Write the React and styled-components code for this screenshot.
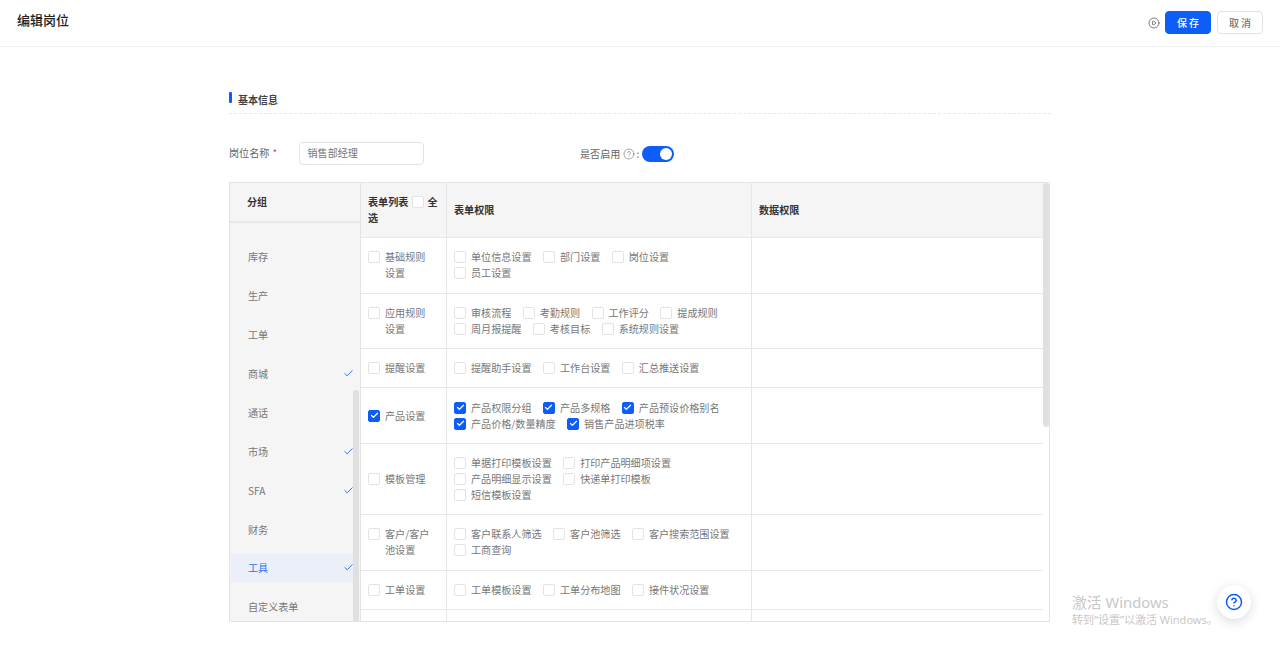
import React from "react";
import styled, { createGlobalStyle } from "styled-components";
import { CirclePlay, CircleHelp, Check } from "lucide-react";

const Global = createGlobalStyle`
  html, body { margin: 0; padding: 0; background: #fff; }
  body { font-family: "Noto Sans CJK SC", "Noto Sans", sans-serif; color: #666; font-size: 10.1px; }
  * { box-sizing: border-box; }
`;

const Page = styled.div`
  position: relative;
  width: 1280px;
  height: 663px;
  overflow: hidden;
`;
const Header = styled.header`
  height: 47px;
  border-bottom: 1px solid #f2f2f2;
  display: flex;
  align-items: flex-start;
  justify-content: space-between;
  padding: 11px 17px 0;
`;
const Title = styled.h1`
  margin: 0;
  font-size: 13px;
  line-height: 18px;
  font-weight: 500;
  color: #222;
`;
const Actions = styled.div`
  display: flex;
  align-items: center;
  color: #555;
  svg { margin-right: 5px; margin-top: 1px; }
`;
const Button = styled.button`
  width: 46px;
  height: 23px;
  margin-left: ${(p) => (p.$primary ? "0" : "6px")};
  border-radius: 4px;
  border: 1px solid ${(p) => (p.$primary ? "#0d5ef8" : "#e3e3e3")};
  background: ${(p) => (p.$primary ? "#0d5ef8" : "#fff")};
  color: ${(p) => (p.$primary ? "#fff" : "#777")};
  font: 500 10px/1 "Noto Sans CJK SC", sans-serif;
  letter-spacing: 2px;
  padding: 0 0 0 2px;
`;
const Main = styled.main`
  width: 822px;
  margin: 0 auto;
  padding-top: 45px;
`;
const SectionHead = styled.div`
  height: 22px;
  border-bottom: 1px dashed #e8e8e8;
  display: flex;
  align-items: flex-start;
`;
const SectionBar = styled.i`
  width: 3px;
  height: 11px;
  border-radius: 1px;
  background: #0d5ef8;
`;
const SectionTitle = styled.h2`
  margin: 0 0 0 6px;
  font-size: 10px;
  line-height: 16px;
  font-weight: 700;
  color: #444;
`;
const FormRow = styled.div`
  display: flex;
  align-items: center;
  height: 23px;
  margin-top: 28px;
`;
const NameLabel = styled.label`
  width: 69.5px;
  color: #666;
  line-height: 16px;
  margin-top: -2px;
`;
const Star = styled.span`
  color: #f5455c;
  margin-left: 3px;
`;
const NameInput = styled.div`
  width: 125px;
  height: 23px;
  border: 1px solid #e3e3e6;
  border-radius: 4px;
  padding-left: 8px;
  line-height: 20px;
  color: #777;
`;
const Enable = styled.div`
  display: flex;
  align-items: center;
  margin-left: 156.5px;
  color: #666;
  svg { margin: 0 1px 0 3px; color: #777; }
`;
const Toggle = styled.span`
  position: relative;
  display: block;
  width: 32px;
  height: 16px;
  margin-left: 3px;
  border-radius: 8px;
  background: #0d5ef8;
  &::after {
    content: "";
    position: absolute;
    right: 2px;
    top: 2px;
    width: 12px;
    height: 12px;
    border-radius: 50%;
    background: #fff;
  }
`;
const TableBox = styled.div`
  position: relative;
  width: 821px;
  height: 440px;
  margin-top: 17px;
  border: 1px solid #e3e3e3;
  display: flex;
  overflow: hidden;
`;
const Side = styled.aside`
  position: relative;
  width: 131px;
  flex: none;
  background: #f5f5f5;
  border-right: 1px solid #e3e3e3;
`;
const SideHead = styled.div`
  height: 40px;
  padding-left: 17px;
  line-height: 37px;
  font-weight: 700;
  color: #333;
  border-bottom: 2px solid #e8e8e8;
`;
const SideList = styled.ul`
  list-style: none;
  margin: 0;
  padding: 20px 7px 0 1px;
`;
const SideItem = styled.li`
  height: 27.6px;
  margin-bottom: 11.3px;
  padding: 0 0 0 17px;
  display: flex;
  align-items: center;
  justify-content: space-between;
  background: ${(p) => (p.$active ? "#eaeff8" : "transparent")};
  color: ${(p) => (p.$active ? "#2f6fe8" : "#777")};
  svg { color: #1f66ee; margin-right: -1px; }
`;
const Right = styled.div`
  flex: 1;
  min-width: 0;
  padding-right: 6px;
`;
const Row = styled.div`
  display: grid;
  grid-template-columns: 86px 305px 1fr;
  background: ${(p) => (p.$head ? "#f5f5f5" : "#fff")};
  border-bottom: 1px solid #e8e8e8;
`;
const Cell = styled.div`
  padding: ${(p) => (p.$head ? "11px 7px 11.3px 7px" : "11.2px 16px 11.2px 7px")};
  display: flex;
  align-items: center;
  line-height: 16px;
  border-right: 1px solid #e6e6e6;
  &:last-child { border-right: 0; }
`;
const HeadText = styled.div`
  font-weight: 700;
  color: #333;
  line-height: 16px;
`;
const Box = styled.span`
  display: inline-flex;
  flex: none;
  align-items: center;
  justify-content: center;
  width: 12px;
  height: 12px;
  margin-top: 2px;
  border-radius: 2px;
  border: 1px solid ${(p) => (p.$on ? "#0d5ef8" : "#e3e3e3")};
  background: ${(p) => (p.$on ? "#0d5ef8" : "#fff")};
  color: #fff;
`;
const InlineBox = styled(Box)`
  vertical-align: -2px;
  margin: 0 3px 0 4px;
`;
const Option = styled.span`
  display: inline-flex;
  align-items: flex-start;
  gap: 5px;
  color: #777;
`;
const Group = styled(Option)`
  width: 100%;
`;
const Options = styled.div`
  display: flex;
  flex-wrap: wrap;
  column-gap: 11.4px;
  width: 100%;
`;
const Spacer = styled.div`
  height: 40px;
`;
const Scroll = styled.i`
  position: absolute;
  width: 6px;
  border-radius: 3px;
  background: #e0e0e0;
  right: ${(p) => p.$right}px;
  top: ${(p) => p.$top}px;
  height: ${(p) => p.$height}px;
`;
const Watermark = styled.div`
  position: absolute;
  left: 1072px;
  top: 593px;
  color: #c8c8c8;
  font-family: "Noto Sans", "Noto Sans CJK SC", sans-serif;
  font-size: 11px;
  line-height: 16px;
`;
const WatermarkTitle = styled.div`
  font-size: 14.8px;
  line-height: 19px;
`;
const HelpButton = styled.div`
  position: absolute;
  left: 1217px;
  top: 585px;
  width: 34px;
  height: 34px;
  border-radius: 50%;
  background: #fff;
  box-shadow: 0 3px 12px rgba(0, 0, 0, 0.14);
  display: flex;
  align-items: center;
  justify-content: center;
  color: #0d5ef8;
`;

const Tick = () => <Check size={9} strokeWidth={3.4} />;
const Checkbox = ({ on }) => <Box $on={on}>{on && <Tick />}</Box>;

const groups = [
  ["库存"], ["生产"], ["工单"], ["商城", 1], ["通话"], ["市场", 1], ["SFA", 1], ["财务"], ["工具", 1, 1], ["自定义表单"],
];
const rows = [
  { name: "基础规则设置", items: ["单位信息设置", "部门设置", "岗位设置", "员工设置"] },
  { name: "应用规则设置", items: ["审核流程", "考勤规则", "工作评分", "提成规则", "周月报提醒", "考核目标", "系统规则设置"] },
  { name: "提醒设置", items: ["提醒助手设置", "工作台设置", "汇总推送设置"] },
  { name: "产品设置", on: true, items: ["产品权限分组", "产品多规格", "产品预设价格别名", "产品价格/数量精度", "销售产品进项税率"] },
  { name: "模板管理", items: ["单据打印模板设置", "打印产品明细项设置", "产品明细显示设置", "快递单打印模板", "短信模板设置"] },
  { name: "客户/客户池设置", items: ["客户联系人筛选", "客户池筛选", "客户搜索范围设置", "工商查询"] },
  { name: "工单设置", items: ["工单模板设置", "工单分布地图", "接件状况设置"] },
];

export default function App() {
  return (
    <Page>
      <Global />
      <Header>
        <Title>编辑岗位</Title>
        <Actions>
          <CirclePlay size={12} strokeWidth={1.5} />
          <Button $primary>保存</Button>
          <Button>取消</Button>
        </Actions>
      </Header>
      <Main>
        <SectionHead>
          <SectionBar />
          <SectionTitle>基本信息</SectionTitle>
        </SectionHead>
        <FormRow>
          <NameLabel>岗位名称<Star>*</Star></NameLabel>
          <NameInput>销售部经理</NameInput>
          <Enable>
            是否启用
            <CircleHelp size={12} strokeWidth={1.3} />
            :
            <Toggle />
          </Enable>
        </FormRow>
        <TableBox>
          <Side>
            <SideHead>分组</SideHead>
            <SideList>
              {groups.map(([label, done, active]) => (
                <SideItem key={label} $active={active}>
                  {label}
                  {done && <Check size={11} strokeWidth={2} />}
                </SideItem>
              ))}
            </SideList>
            <Scroll $right={1} $top={207} $height={233} />
          </Side>
          <Right>
            <Row $head>
              <Cell $head>
                <HeadText>
                  表单列表<InlineBox />全<br />选
                </HeadText>
              </Cell>
              <Cell $head><HeadText>表单权限</HeadText></Cell>
              <Cell $head><HeadText>数据权限</HeadText></Cell>
            </Row>
            {rows.map((r) => (
              <Row key={r.name}>
                <Cell>
                  <Group>
                    <Checkbox on={r.on} />
                    <span>{r.name}</span>
                  </Group>
                </Cell>
                <Cell>
                  <Options>
                    {r.items.map((it) => (
                      <Option key={it}>
                        <Checkbox on={r.on} />
                        {it}
                      </Option>
                    ))}
                  </Options>
                </Cell>
                <Cell />
              </Row>
            ))}
            <Row>
              <Cell><Spacer /></Cell>
              <Cell />
              <Cell />
            </Row>
          </Right>
          <Scroll $right={0} $top={0} $height={244} />
        </TableBox>
      </Main>
      <Watermark>
        <WatermarkTitle>激活 Windows</WatermarkTitle>
        转到“设置”以激活 Windows。
      </Watermark>
      <HelpButton>
        <CircleHelp size={18} strokeWidth={2} />
      </HelpButton>
    </Page>
  );
}
